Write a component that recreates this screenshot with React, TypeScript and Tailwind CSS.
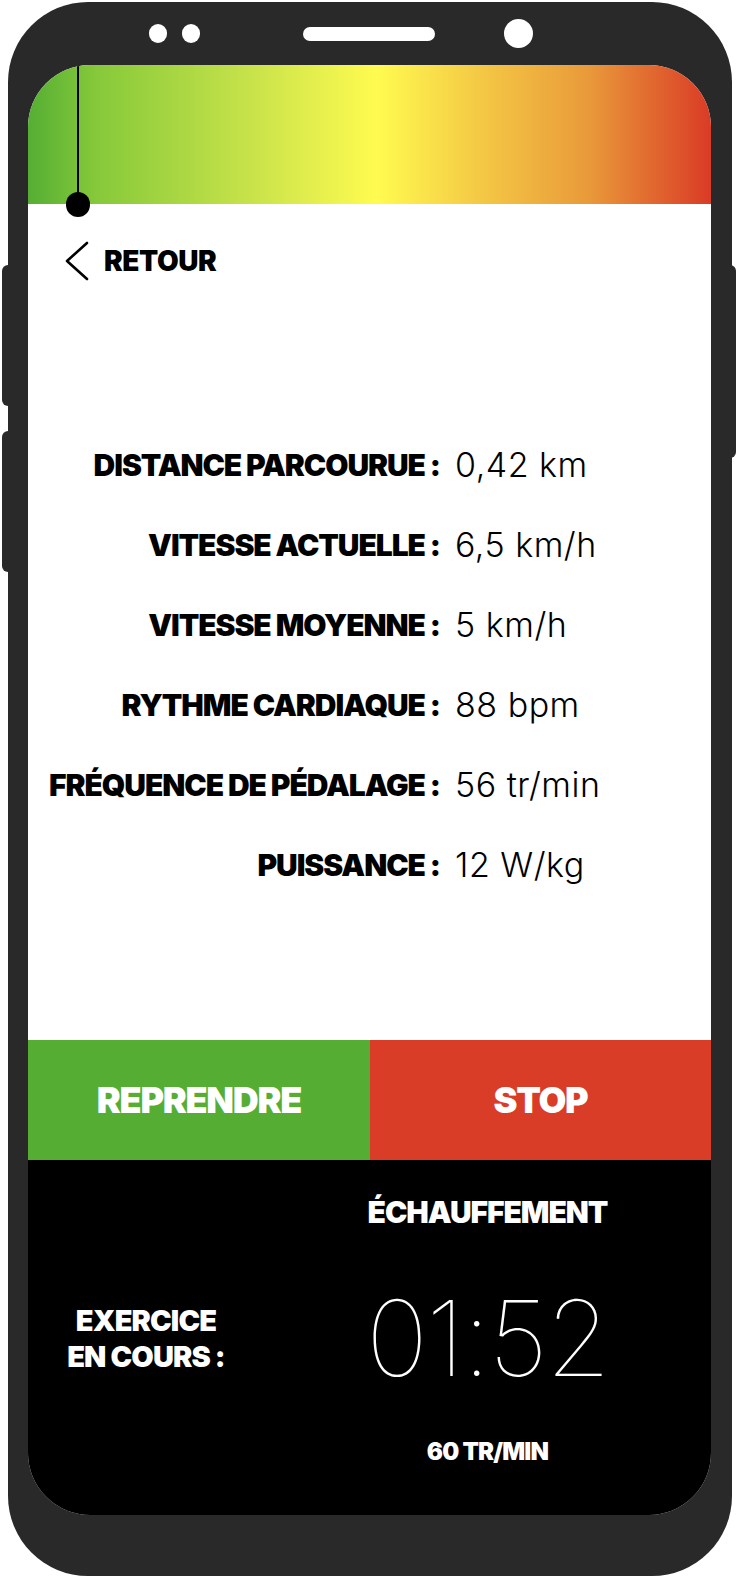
const STATS = [
  { label: 'DISTANCE PARCOURUE', value: '0,42 km' },
  { label: 'VITESSE ACTUELLE', value: '6,5 km/h' },
  { label: 'VITESSE MOYENNE', value: '5 km/h' },
  { label: 'RYTHME CARDIAQUE', value: '88 bpm' },
  { label: 'FRÉQUENCE DE PÉDALAGE', value: '56 tr/min' },
  { label: 'PUISSANCE', value: '12 W/kg' },
];

const heavy = "font-['Inter',sans-serif] font-black";

export default function App() {
  return (
    <div className="w-[738px] h-[1578px] bg-white pt-[2px] pl-[8px]">
      <div className="relative w-[724px] h-[1574px] rounded-[80px] bg-[#292929] pl-[20px] pr-[21px] flex flex-col">
        {/* side buttons */}
        <div className="absolute left-[-6px] top-[263px] w-[10px] h-[141px] rounded-l-[6px] bg-[#292929]" />
        <div className="absolute left-[-6px] top-[429px] w-[10px] h-[141px] rounded-l-[6px] bg-[#292929]" />
        <div className="absolute right-[-4px] top-[263px] w-[10px] h-[193px] rounded-r-[6px] bg-[#292929]" />

        {/* top bezel: sensors, speaker, camera */}
        <div className="h-[63px] shrink-0 flex items-center pl-[121px]">
          <div className="w-[18px] h-[19px] rounded-full bg-white" />
          <div className="w-[18px] h-[19px] rounded-full bg-white ml-[15px]" />
          <div className="w-[132px] h-[14px] rounded-full bg-white ml-[103px]" />
          <div className="w-[29px] h-[29px] rounded-full bg-white ml-[69px]" />
        </div>

        {/* screen */}
        <div className="w-[683px] h-[1450px] shrink-0 rounded-[62px] overflow-hidden flex flex-col bg-white">
          <div className="relative h-[139px] shrink-0 bg-[linear-gradient(90deg,#55ae33_0%,#86c93a_10%,#c9e34a_33%,#fffb50_51%,#f4c945_66%,#e99a3a_82%,#da3b26_100%)]">
            <div className="absolute left-[49px] top-0 w-[2px] h-[139px] bg-black" />
            <div className="absolute left-[38px] top-[127px] w-[24px] h-[25px] rounded-full bg-black" />
          </div>

          <div className="h-[836px] shrink-0 bg-white flex flex-col">
            <div className="flex items-center h-[44px] mt-[35px] pl-[36px]">
              <svg width="26" height="40" viewBox="0 0 26 40" fill="none" className="shrink-0">
                <polyline points="23,2 3,20 23,38" stroke="black" strokeWidth="2.6" strokeLinecap="round" strokeLinejoin="round" />
              </svg>
              <span className={`${heavy} text-[28px] leading-[44px] tracking-[-0.015em] text-black ml-[14px]`}>RETOUR</span>
            </div>

            <div className="grid grid-cols-[412px_1fr] gap-y-[36px] mt-[160px] items-center">
              {STATS.map((s) => (
                <div key={s.label} className="contents">
                  <div className={`${heavy} text-[30px] leading-[44px] tracking-[-0.035em] text-black text-right whitespace-nowrap`}>
                    {s.label}&nbsp;:
                  </div>
                  <div className="font-['Inter',sans-serif] font-light text-[34px] leading-[44px] text-black pl-[15px] tracking-[0.015em] whitespace-nowrap">
                    {s.value}
                  </div>
                </div>
              ))}
            </div>
          </div>

          <div className="h-[120px] shrink-0 flex">
            <button className={`w-[342px] bg-[#55ae33] text-white text-[36px] tracking-[-0.035em] ${heavy}`}>REPRENDRE</button>
            <button className={`flex-1 bg-[#d93c27] text-white text-[36px] tracking-[-0.035em] ${heavy}`}>STOP</button>
          </div>

          <div className="flex-1 bg-black grid grid-cols-[236px_1fr] text-white">
            <div className="flex items-center justify-center">
              <div className={`${heavy} text-[29px] leading-[36px] tracking-[-0.03em] text-center mt-[3px]`}>
                EXERCICE
                <br />
                EN COURS&nbsp;:
              </div>
            </div>
            <div className="flex flex-col items-center pt-[36px]">
              <div className={`${heavy} text-[30px] leading-[32px] tracking-[-0.035em]`}>ÉCHAUFFEMENT</div>
              <div className="font-['Inter',sans-serif] font-thin text-[105px] leading-[106px] mt-[57px] tracking-[-0.02em]">
                01:52
              </div>
              <div className={`${heavy} text-[24px] leading-[28px] mt-[47px] tracking-[-0.035em]`}>60 TR/MIN</div>
            </div>
          </div>
        </div>
      </div>
    </div>
  );
}
